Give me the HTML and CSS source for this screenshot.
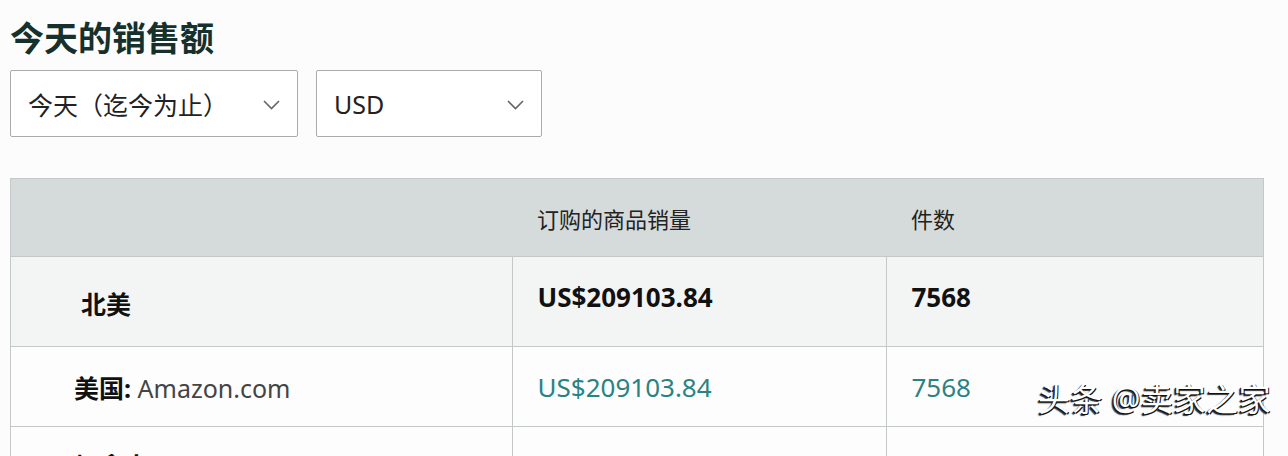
FILE: index.html
```html
<!DOCTYPE html>
<html lang="zh-CN">
<head>
    <meta charset="UTF-8">
    <meta name="viewport" content="width=device-width, initial-scale=1.0">
    <title>今天的销售额</title>
    <link rel="stylesheet" href="styles.css">
</head>
<body>
    <div class="page">
        <h1 class="title">今天的销售额</h1>

        <div class="filters">
            <div class="select select-range">
                <span>今天（迄今为止）</span>
                <svg class="chevron" width="17" height="10" viewBox="0 0 17 10"><path d="M1 1 L8.5 8.5 L16 1" fill="none" stroke="#666" stroke-width="1.6"/></svg>
            </div>
            <div class="select select-currency">
                <span>USD</span>
                <svg class="chevron" width="17" height="10" viewBox="0 0 17 10"><path d="M1 1 L8.5 8.5 L16 1" fill="none" stroke="#666" stroke-width="1.6"/></svg>
            </div>
        </div>

        <table class="sales">
            <thead>
                <tr>
                    <th class="col-region"></th>
                    <th class="col-amount">订购的商品销量</th>
                    <th class="col-units">件数</th>
                </tr>
            </thead>
            <tbody>
                <tr class="row-total">
                    <td class="region-total">北美</td>
                    <td class="value">US$209103.84</td>
                    <td class="value">7568</td>
                </tr>
                <tr class="row-market">
                    <td class="region"><b>美国:</b> <span class="site">Amazon.com</span></td>
                    <td class="link">US$209103.84</td>
                    <td class="link">7568</td>
                </tr>
                <tr class="row-market row-last">
                    <td class="region"><b>加拿大</b></td>
                    <td class="link">US$0.00</td>
                    <td class="link">0</td>
                </tr>
            </tbody>
        </table>

        <div class="watermark">头条 @卖家之家</div>
    </div>
</body>
</html>
```

FILE: styles.css
```css
body {
    margin: 0;
    background: #fcfcfc;
    font-family: "Noto Sans", "Noto Sans CJK SC", sans-serif;
    color: #111;
    overflow: hidden;
}
.page {
    position: relative;
    padding: 18px 25px 0 10px;
}
.title {
    margin: 0;
    font-size: 34px;
    line-height: 40px;
    font-weight: 700;
    color: #16302c;
}
.filters {
    display: flex;
    gap: 18px;
    margin-top: 12px;
}
.select {
    box-sizing: border-box;
    height: 67px;
    display: flex;
    align-items: center;
    justify-content: space-between;
    padding: 0 17px 0 17px;
    border: 1px solid #a9acac;
    border-radius: 2px;
    background: #fff;
    font-size: 25px;
    color: #222;
}
.select-range {
    width: 288px;
}
.select-currency {
    width: 226px;
}
.chevron {
    margin-top: 2px;
}
.sales {
    margin-top: 41px;
    width: 1254px;
    border-collapse: collapse;
    border: 1px solid #c4c8c8;
    font-size: 25px;
}
.sales th {
    height: 77px;
    background: #d5dbdb;
    text-align: left;
    font-weight: 400;
    font-size: 22px;
    color: #222;
    padding: 0 0 0 25px;
}
.col-region {
    width: 476px;
}
.col-amount {
    width: 349px;
}
.sales td {
    border: 1px solid #c4c8c8;
    padding: 0 0 0 25px;
    vertical-align: middle;
}
.row-total td {
    height: 80px;
    background: #f3f5f5;
    font-weight: 700;
}
.row-total .value {
    padding-bottom: 9px;
    font-size: 26px;
}
.row-total .region-total {
    padding: 3px 0 0 70px;
    font-size: 25px;
}
.row-market td {
    height: 79px;
    background: #fdfdfd;
}
.row-market .link {
    font-size: 26px;
}
.row-last td {
    vertical-align: top;
    padding-top: 22px;
    line-height: 34px;
}
.sales .region {
    padding-left: 63px;
}
.region b {
    font-weight: 700;
}
.site {
    color: #444;
}
.link {
    color: #2b8282;
}
.watermark {
    position: absolute;
    left: 1038px;
    top: 374px;
    font-size: 32px;
    color: #fff;
    letter-spacing: 0.5px;
    text-shadow: -1px 1px 0 #111, 1px 1px 0 #111, -2px 2px 1px #333;
}
```
